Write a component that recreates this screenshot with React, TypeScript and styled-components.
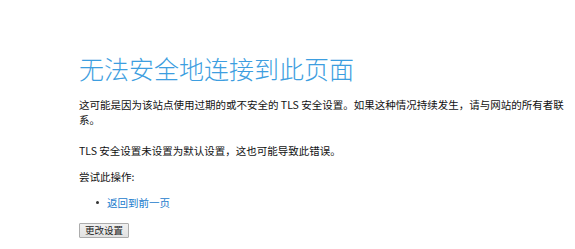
import styled, { createGlobalStyle } from 'styled-components'

const GlobalStyle = createGlobalStyle`
  html, body {
    margin: 0;
    padding: 0;
    background: #ffffff;
  }
  body {
    font-family: "Noto Sans CJK SC", "Noto Sans", sans-serif;
    color: #1a1a1a;
  }
`

const Page = styled.div`
  padding: 52px 0 0 79px;
`

const Title = styled.h1`
  margin: 0;
  font-size: 25px;
  line-height: 32px;
  font-weight: 300;
  color: #3d9ee0;
  letter-spacing: 0;
`

const Text = styled.p<{ gap: number }>`
  margin: ${({ gap }) => gap}px 0 0 0;
  width: 492px;
  font-size: 10.5px;
  line-height: 15px;
  color: #111;
`

const Bullets = styled.ul`
  list-style: none;
  margin: 11px 0 0 0;
  padding: 0 0 0 17px;
`

const Item = styled.li`
  display: flex;
  align-items: center;
  gap: 8px;
  font-size: 10.5px;
  line-height: 15px;
`

const Dot = styled.span`
  display: block;
  width: 3px;
  height: 3px;
  border-radius: 50%;
  background: #333;
`

const LinkText = styled.a`
  color: #1a7bcd;
  text-decoration: none;
  cursor: pointer;
`

const ActionButton = styled.button`
  display: block;
  margin-top: 13px;
  width: 50px;
  height: 15px;
  padding: 0;
  font-family: inherit;
  font-size: 9.5px;
  line-height: 13px;
  color: #222;
  border: 1px solid #acacac;
  border-radius: 1px;
  background: linear-gradient(#f0f0f0, #e2e2e2);
`

export default function App() {
  return (
    <>
      <GlobalStyle />
      <Page>
        <Title>无法安全地连接到此页面</Title>
        <Text gap={13}>
          这可能是因为该站点使用过期的或不安全的 TLS 安全设置。如果这种情况持续发生，请与网站的所有者联系。
        </Text>
        <Text gap={16}>TLS 安全设置未设置为默认设置，这也可能导致此错误。</Text>
        <Text gap={11}>尝试此操作:</Text>
        <Bullets>
          <Item>
            <Dot />
            <LinkText>返回到前一页</LinkText>
          </Item>
        </Bullets>
        <ActionButton>更改设置</ActionButton>
      </Page>
    </>
  )
}
